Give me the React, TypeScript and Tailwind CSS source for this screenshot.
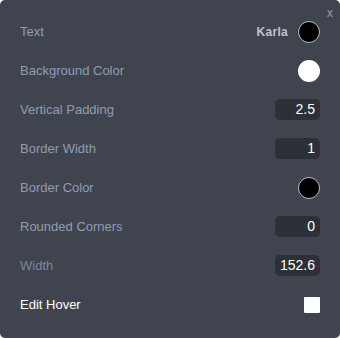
import * as React from "react";

const font = { fontFamily: '"Liberation Sans", Arial, sans-serif' };

const NumberBox: React.FC<{ value: string }> = ({ value }) => (
  <div className="w-[45px] h-[21px] rounded-[5px] bg-[#2d3037] text-white text-[14px] leading-[21px] text-right pr-[5px]">
    {value}
  </div>
);

const Swatch: React.FC<{ color: "black" | "white" }> = ({ color }) =>
  color === "black" ? (
    <div className="w-[22px] h-[22px] rounded-full bg-black border border-[#b8bcc4]" />
  ) : (
    <div className="w-[22px] h-[22px] rounded-full bg-white" />
  );

const Row: React.FC<{ label: string; labelClass?: string; children: React.ReactNode }> = ({
  label,
  labelClass = "text-[#8f9db3]",
  children,
}) => (
  <div className="flex items-center justify-between h-[39px]">
    <span className={`text-[13px] ${labelClass}`}>{label}</span>
    <div className="flex items-center">{children}</div>
  </div>
);

export default function App() {
  return (
    <div style={font} className="w-[340px] h-[338px] bg-white">
      <div className="relative w-[340px] h-[338px] rounded-[5px] bg-[#40444f] pl-[20px] pr-[20px] pt-[12px]">
        <span className="absolute right-[7px] top-[4px] text-[12px] text-[#8fa0b8]">x</span>
        <Row label="Text">
          <span className="text-[12px] font-bold text-[#bcc5d2] mr-[10px] tracking-[0.3px]">Karla</span>
          <Swatch color="black" />
        </Row>
        <Row label="Background Color">
          <Swatch color="white" />
        </Row>
        <Row label="Vertical Padding">
          <NumberBox value="2.5" />
        </Row>
        <Row label="Border Width">
          <NumberBox value="1" />
        </Row>
        <Row label="Border Color">
          <Swatch color="black" />
        </Row>
        <Row label="Rounded Corners">
          <NumberBox value="0" />
        </Row>
        <Row label="Width" labelClass="text-[#7b889c]">
          <NumberBox value="152.6" />
        </Row>
        <Row label="Edit Hover" labelClass="text-white">
          <div className="w-[16px] h-[16px] bg-white rounded-[1px]" />
        </Row>
      </div>
    </div>
  );
}
